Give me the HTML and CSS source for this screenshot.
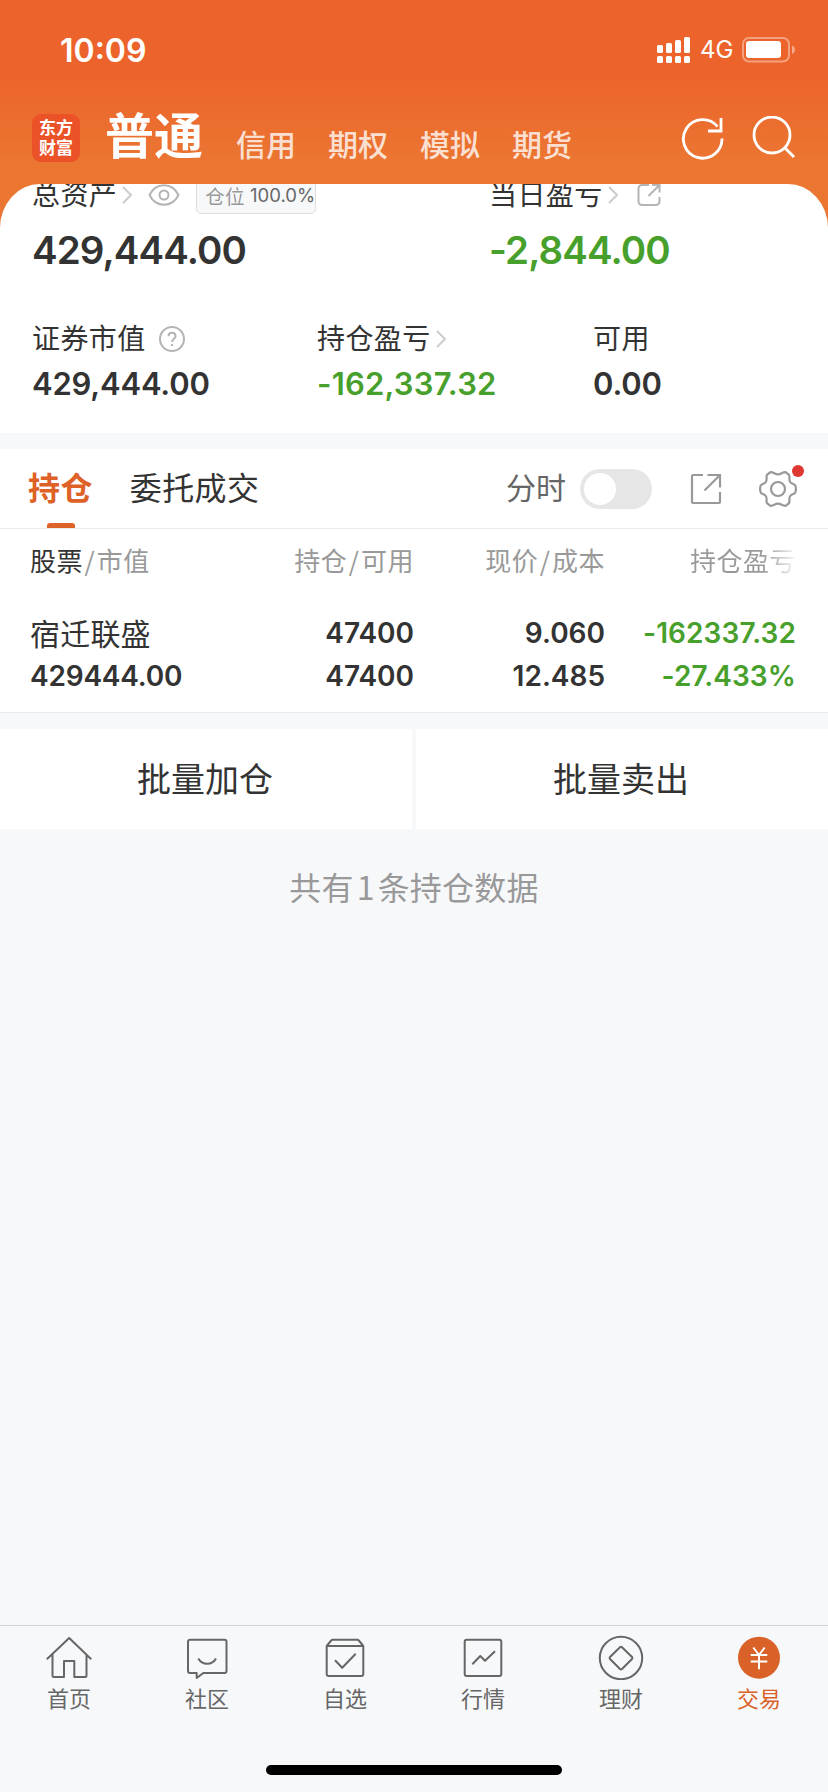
FILE: index.html
```
<!DOCTYPE html>
<html lang="zh-CN">
<head>
  <meta charset="UTF-8">
  <meta name="viewport" content="width=device-width, initial-scale=1.0">
  <title>交易</title>
  <link rel="stylesheet" href="styles.css">
</head>
<body>
  <div class="app">
    <header class="header">
      <div class="status-bar">
        <span class="time">10:09</span>
        <div class="status-icons">
          <svg class="signal" width="34" height="27" viewBox="0 0 34 27" fill="#fff">
            <rect x="0" y="8" width="6" height="8" rx="1.5"/>
            <rect x="9" y="6" width="6" height="10" rx="1.5"/>
            <rect x="18" y="3" width="6" height="13" rx="1.5"/>
            <rect x="27" y="0" width="6" height="16" rx="1.5"/>
            <rect x="0" y="19" width="6" height="7" rx="1.5"/>
            <rect x="9" y="19" width="6" height="7" rx="1.5"/>
            <rect x="18" y="19" width="6" height="7" rx="1.5"/>
            <rect x="27" y="19" width="6" height="7" rx="1.5"/>
          </svg>
          <span class="network">4G</span>
          <svg width="54" height="26" viewBox="0 0 54 26">
            <rect x="1" y="1" width="46" height="23.5" rx="6" fill="none" stroke="#fff" stroke-opacity=".4" stroke-width="2"/>
            <rect x="4" y="4" width="35" height="17" rx="3" fill="#fff"/>
            <path d="M50 8.500c4 1.500 4 7 0 8.500z" fill="#fff" fill-opacity=".45"/>
          </svg>
        </div>
      </div>
      <nav class="account-nav">
        <div class="logo"><span>东方</span><span>财富</span></div>
        <span class="account active">普通</span>
        <span class="account">信用</span>
        <span class="account">期权</span>
        <span class="account">模拟</span>
        <span class="account">期货</span>
        <div class="nav-icons">
          <svg width="44" height="44" viewBox="0 0 44 44" fill="none" stroke="#fff" stroke-width="2.800">
            <path d="M41 22.500A19.300 19.300 0 1 1 36.500 10.500"/>
            <path d="M40 2v13H27"/>
          </svg>
          <svg width="44" height="44" viewBox="0 0 44 44" fill="none" stroke="#fff" stroke-width="2.800">
            <circle cx="21" cy="19" r="18"/>
            <path d="M33.500 31.500L43 41"/>
          </svg>
        </div>
      </nav>
    </header>

    <section class="summary">
      <div class="summary-main">
        <div class="item">
          <div class="label">总资产
            <svg class="chevron" width="10" height="18" viewBox="0 0 10 18"><path d="M1 1l8 8-8 8"/></svg>
            <svg class="eye" width="32" height="22" viewBox="0 0 32 22">
              <path d="M1.500 11C8-2 24-2 30.500 11 24 24 8 24 1.500 11z"/>
              <circle cx="16" cy="11" r="4.500"/>
            </svg>
            <span class="ratio">仓位 <b>100.0%</b></span>
          </div>
          <div class="value">429,444.00</div>
        </div>
        <div class="item">
          <div class="label">当日盈亏
            <svg class="chevron" width="10" height="18" viewBox="0 0 10 18"><path d="M1 1l8 8-8 8"/></svg>
            <svg class="share-small" width="24" height="24" viewBox="0 0 24 24">
              <path d="M12 2H5a3.500 3.500 0 0 0-3.500 3.500v13A3.500 3.500 0 0 0 5 22h14a3.500 3.500 0 0 0 3.500-3.500V14M15 2h7.500v7.500M22 2.500L11.500 13"/>
            </svg>
          </div>
          <div class="value down">-2,844.00</div>
        </div>
      </div>
      <div class="summary-sub">
        <div class="item">
          <div class="label">证券市值
            <svg class="help" width="26" height="26" viewBox="0 0 26 26">
              <circle cx="13" cy="13" r="12"/>
              <path d="M9.500 10.200c0-4.600 7-4.600 7 0 0 2.500-3.400 2.700-3.400 5.800M13.100 18v2"/>
            </svg>
          </div>
          <div class="value">429,444.00</div>
        </div>
        <div class="item">
          <div class="label">持仓盈亏
            <svg class="chevron" width="10" height="18" viewBox="0 0 10 18"><path d="M1 1l8 8-8 8"/></svg>
          </div>
          <div class="value down">-162,337.32</div>
        </div>
        <div class="item">
          <div class="label">可用</div>
          <div class="value">0.00</div>
        </div>
      </div>
    </section>

    <section class="positions">
      <div class="tabs">
        <span class="tab active">持仓</span>
        <span class="tab">委托成交</span>
        <div class="tools">
          <span class="tool-label">分时</span>
          <span class="switch"></span>
          <svg class="share" width="32" height="32" viewBox="0 0 32 32">
            <path d="M13 2H3a1 1 0 0 0-1 1v26a1 1 0 0 0 1 1h26a1 1 0 0 0 1-1V19M17.500 2H30v12.500M29.500 2.500L14.500 17.500"/>
          </svg>
          <div class="settings">
            <svg width="38" height="38" viewBox="0 0 38 38">
              <path d="M11.500 2.200C15 2 15.500 4.300 19 4.300S23 2 26.500 2.200L30 4.800C31.200 7 29.500 9.500 31.200 12S35.500 13.500 36.300 15.500Q37.500 19 36.300 22.500C35.500 24.500 32.900 23.500 31.200 26S31.200 31 30 33.200L26.500 35.800C23 36 22.500 33.700 19 33.700S15 36 11.500 35.800L8 33.200C6.800 31 8.500 28.500 6.800 26S2.500 24.500 1.700 22.500Q.5 19 1.700 15.500C2.500 13.500 5.100 14.500 6.800 12S6.800 7 8 4.800Z"/>
              <circle cx="19" cy="19" r="7"/>
            </svg>
            <i class="dot"></i>
          </div>
        </div>
      </div>
      <div class="row table-head">
        <span><em>股票</em><i>/</i>市值</span>
        <span>持仓<i>/</i>可用</span>
        <span>现价<i>/</i>成本</span>
        <span class="fade">持仓盈亏</span>
      </div>
      <div class="row stock">
        <div><p class="name">宿迁联盛</p><p class="amount">429444.00</p></div>
        <div><p>47400</p><p>47400</p></div>
        <div><p>9.060</p><p>12.485</p></div>
        <div class="down"><p>-162337.32</p><p>-27.433%</p></div>
      </div>
    </section>

    <div class="batch">
      <div class="batch-btn">批量加仓</div>
      <div class="batch-btn">批量卖出</div>
    </div>
    <p class="total">共有<span>1</span>条持仓数据</p>

    <footer class="footer">
      <nav class="tabbar">
        <div class="tabbar-item">
          <svg width="46" height="46" viewBox="0 0 46 46">
            <path d="M.8 25.300L23.200 4 45.200 25.300M6.500 20.500V41.500a1.500 1.500 0 0 0 1.500 1.500H18V27h10.300v16H39a1.500 1.500 0 0 0 1.500-1.500V20.500"/>
          </svg>
          <span>首页</span>
        </div>
        <div class="tabbar-item">
          <svg width="46" height="46" viewBox="0 0 46 46">
            <path d="M6 5.700h34.500a2 2 0 0 1 2 2V37a2 2 0 0 1-2 2H19.300l-6.600 5V39H6a2 2 0 0 1-2-2V7.700a2 2 0 0 1 2-2zM14.300 24.500c4 7 13.700 7 17.700 0"/>
          </svg>
          <span>社区</span>
        </div>
        <div class="tabbar-item">
          <svg width="46" height="46" viewBox="0 0 46 46">
            <path d="M4.700 12h36.600v28a2 2 0 0 1-2 2H6.700a2 2 0 0 1-2-2zL9.200 6.500a2 2 0 0 1 1.500-.8h24.600a2 2 0 0 1 1.500.8L41.300 12M13 26.300l7.200 7.400 13.500-14"/>
          </svg>
          <span>自选</span>
        </div>
        <div class="tabbar-item">
          <svg width="46" height="46" viewBox="0 0 46 46">
            <rect x="4.700" y="5.700" width="36.600" height="36.300" rx="2"/>
            <path d="M12.300 30.300l8-8.300 4.700 4.700 10-9.400"/>
          </svg>
          <span>行情</span>
        </div>
        <div class="tabbar-item">
          <svg width="46" height="46" viewBox="0 0 46 46">
            <circle cx="23" cy="24" r="21.200"/>
            <path d="M22 13.200a1.500 1.500 0 0 1 2 0L34 23a1.500 1.500 0 0 1 0 2L24 35a1.500 1.500 0 0 1-2 0L12 25a1.500 1.500 0 0 1 0-2z"/>
          </svg>
          <span>理财</span>
        </div>
        <div class="tabbar-item active">
          <svg width="46" height="46" viewBox="0 0 46 46">
            <circle class="coin" cx="23" cy="23.700" r="21"/>
            <path class="yen" d="M17.300 13.500L23 21l5.700-7.500M23 21v14.200M14.700 21h16.600M14.700 27.500h16.600"/>
          </svg>
          <span>交易</span>
        </div>
      </nav>
      <div class="home-indicator"></div>
    </footer>
  </div>
</body>
</html>
```
FILE: styles.css
```
* {
  box-sizing: border-box;
}
body {
  margin: 0;
  font-family: "Noto Sans CJK SC", sans-serif;
  color: #333333;
  background: #F7F8FA;
}
p {
  margin: 0;
}
svg {
  flex: none;
  display: block;
}
.app {
  display: flex;
  flex-direction: column;
  height: 1792px;
  overflow: hidden;
  background: linear-gradient(#EC642B 0, #EC642B 75px, #EB7632 165px, #EB7632 240px, #F7F8FA 240px);
}

/* header */
.header {
  height: 184px;
  flex: none;
  color: #FFFFFF;
}
.status-bar {
  display: flex;
  justify-content: space-between;
  align-items: center;
  height: 100px;
  padding: 0 32px 0 60px;
}
.time {
  font-family: Inter, sans-serif;
  font-size: 32px;
  font-weight: 600;
}
.status-icons {
  display: flex;
  align-items: center;
}
.network {
  width: 32px;
  margin: 0 10px 0 9px;
  font-family: Inter, sans-serif;
  font-size: 24px;
  line-height: 26px;
}
.account-nav {
  display: flex;
  height: 84px;
  padding-left: 32px;
}
.logo {
  display: flex;
  flex-direction: column;
  align-items: center;
  width: 48px;
  height: 48px;
  margin: 14px 25px 0 0;
  padding-top: 3px;
  border-radius: 9px;
  background: #EB5228;
  font-size: 17px;
  font-weight: 700;
  line-height: 20px;
}
.account {
  width: 60px;
  margin: 23px 0 0 32px;
  font-size: 30px;
  font-weight: 500;
  line-height: 40px;
  color: rgba(255, 255, 255, 0.8);
}
.account.active {
  width: 99px;
  margin: 3px 0 0 0;
  font-size: 49px;
  line-height: 60px;
  font-weight: 700;
  color: #FFFFFF;
}
.nav-icons {
  display: flex;
  gap: 26px;
  margin: 16px 33px 0 auto;
}

/* assets */
.summary {
  height: 249px;
  flex: none;
  overflow: hidden;
  padding-left: 32px;
  border-radius: 40px 40px 0 0 / 44px 44px 0 0;
  background: #FFFFFF;
}
.summary-main {
  display: grid;
  grid-template-columns: 457px 1fr;
  margin-top: -11px;
}
.summary-sub {
  display: grid;
  grid-template-columns: 285px 276px 1fr;
  margin-top: 42px;
}
.label {
  display: flex;
  align-items: center;
  height: 40px;
  font-size: 28px;
  letter-spacing: 0.4px;
  white-space: nowrap;
}
.label svg {
  fill: none;
  stroke: #B4B4B4;
  stroke-width: 2;
}
.label .chevron {
  margin: 3px 0 0 5px;
  stroke: #CCCCCC;
}
.label .eye {
  margin: 3px 0 0 16px;
}
.label .share-small {
  margin: 3px 0 0 19px;
}
.label .help {
  margin: 3px 0 0 13px;
}
.ratio {
  align-self: flex-end;
  display: flex;
  align-items: center;
  width: 120px;
  height: 37px;
  margin: 0 0 -1px 16px;
  padding: 0 0 1px 8px;
  border: 1px solid #DDDDDD;
  border-radius: 5px;
  background: #F7F8FA;
  font-size: 19.5px;
  color: #999999;
}
.ratio b {
  margin-left: 5px;
  font-family: Inter, sans-serif;
  font-size: 18.5px;
  font-weight: 400;
  letter-spacing: 0;
  color: #666666;
}
.value {
  font-family: Inter, sans-serif;
  font-weight: 600;
  font-size: 31px;
  line-height: 50px;
}
.summary-sub .value {
  margin-top: 2px;
  letter-spacing: -0.2px;
}
.summary-sub .value.down {
  letter-spacing: 0.2px;
}
.summary-main .value {
  margin-top: 12px;
  font-size: 38.5px;
  letter-spacing: -0.9px;
}
.down {
  color: #48A02C;
}

/* positions */
.positions {
  flex: none;
  border-top: 16px solid #F7F8FA;
  border-bottom: 1px solid #EBEBEB;
  background: #FFFFFF;
}
.tabs {
  display: flex;
  height: 80px;
  padding-left: 28px;
  border-bottom: 1px solid #EBEBEB;
  font-size: 32px;
  line-height: 75px;
}
.tab {
  position: relative;
  margin-right: 37px;
  letter-spacing: 0.4px;
}
.tab.active {
  font-weight: 700;
  color: #DE6127;
}
.tab.active::after {
  content: "";
  position: absolute;
  left: 19px;
  bottom: 0;
  width: 28px;
  height: 5px;
  border-radius: 3px 3px 0 0;
  background: #DE6127;
}
.tools {
  display: flex;
  align-items: center;
  margin: 0 31px 0 auto;
}
.tools svg {
  fill: none;
  stroke: #999999;
  stroke-width: 2.2;
}
.tool-label {
  padding-bottom: 4px;
  font-size: 30px;
  color: #666666;
}
.switch {
  width: 72px;
  height: 40px;
  margin-left: 14px;
  padding: 4px;
  border-radius: 20px;
  background: #E6E6E6;
}
.switch::before {
  content: "";
  display: block;
  width: 32px;
  height: 32px;
  border-radius: 50%;
  background: #FFFFFF;
}
.share {
  margin: 0 37px 0 38px;
}
.settings {
  position: relative;
}
.dot {
  position: absolute;
  top: -5px;
  right: -7px;
  width: 12px;
  height: 12px;
  border-radius: 50%;
  background: #DF3831;
}
.row {
  display: grid;
  grid-template-columns: 180px 204px 191px 191px;
  padding-left: 30px;
  text-align: right;
}
.row > :first-child {
  text-align: left;
}
.table-head {
  height: 78px;
  font-size: 26px;
  line-height: 62px;
  letter-spacing: 0.5px;
  color: #999999;
}
.table-head em {
  font-style: normal;
  color: #333333;
}
.table-head i {
  margin: 0 1.5px;
  font-style: normal;
}
.table-head .fade {
  background: linear-gradient(90deg, #999999 82%, rgba(153, 153, 153, 0.1));
  -webkit-background-clip: text;
  background-clip: text;
  color: transparent;
}
.stock {
  height: 105px;
  padding-top: 5px;
  font-family: Inter, sans-serif;
  font-weight: 600;
  font-size: 28px;
  line-height: 43px;
}
.stock .name {
  margin-bottom: 3px;
  font-family: "Noto Sans CJK SC", sans-serif;
  font-weight: 400;
  font-size: 30px;
  line-height: 40px;
  letter-spacing: 0.2px;
}
.stock .amount {
  letter-spacing: -0.2px;
}
.stock .down {
  letter-spacing: 0.1px;
}

/* batch actions */
.batch {
  display: grid;
  grid-template-columns: 1fr 1fr;
  gap: 4px;
  height: 116px;
  flex: none;
  padding-top: 16px;
  background: #F7F8FA;
}
.batch-btn {
  padding-right: 2px;
  background: #FFFFFF;
  font-size: 34px;
  line-height: 97px;
  text-align: center;
}
.total {
  flex: 1;
  padding-top: 34px;
  font-size: 32px;
  line-height: 46px;
  letter-spacing: 0.2px;
  text-align: center;
  color: #999999;
}
.total span {
  margin: 0 3px;
}

/* bottom bar */
.footer {
  height: 167px;
  flex: none;
  border-top: 1px solid #D2D2DA;
}
.tabbar {
  display: flex;
  height: 139px;
}
.tabbar-item {
  flex: 1;
  display: flex;
  flex-direction: column;
  align-items: center;
  padding-top: 8px;
  font-size: 22px;
  line-height: 34px;
  color: #666666;
}
.tabbar-item svg {
  fill: none;
  stroke: #666666;
  stroke-width: 2;
  stroke-linejoin: round;
}
.tabbar-item.active {
  color: #DA6228;
}
.tabbar-item .coin {
  fill: #DA6228;
  stroke: none;
}
.tabbar-item .yen {
  stroke: #FFFFFF;
}
.home-indicator {
  width: 296px;
  height: 10px;
  margin: 0 auto;
  border-radius: 5px;
  background: #000000;
}
```
